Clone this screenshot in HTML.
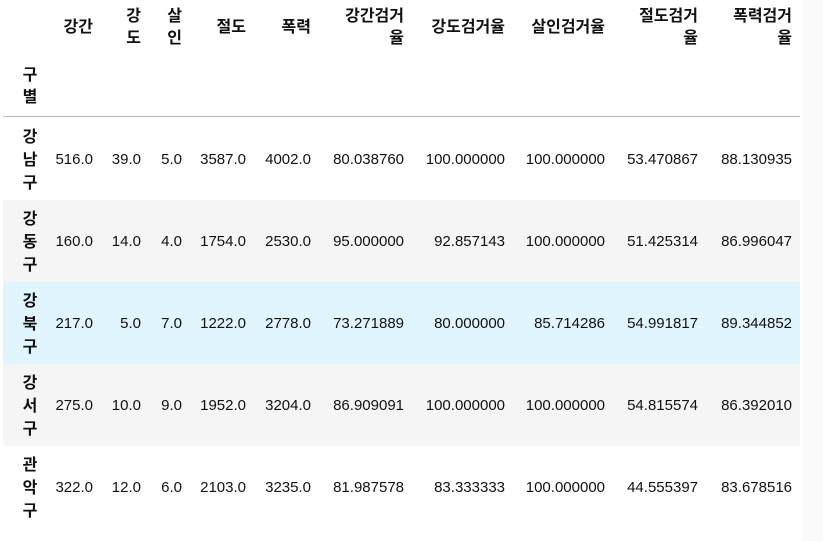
<!DOCTYPE html>
<html><head><meta charset="utf-8"><style>
html,body{margin:0;padding:0;width:823px;height:541px;overflow:hidden;background:#fff;}
body{position:relative;font-family:"Liberation Sans","Noto Sans CJK KR",sans-serif;font-size:16px;color:#111;}
.strip{position:absolute;left:802px;top:0;width:21px;height:541px;background:#fafafa;}
.bg{position:absolute;left:3px;width:797px;}
.line{position:absolute;left:3px;width:797px;top:116px;height:1px;background:#bdbdbd;}
.c{position:absolute;text-align:right;white-space:nowrap;line-height:22px;}
.n{font-size:15px;}
.h{font-weight:bold;}
.idx{position:absolute;left:20px;width:20px;text-align:center;font-weight:bold;line-height:23px;}
</style></head><body>
<div class="strip"></div>
<div class="bg" style="top:200px;height:82px;background:#f5f5f5"></div>
<div class="bg" style="top:282px;height:82px;background:#e1f5fe"></div>
<div class="bg" style="top:364px;height:82px;background:#f5f5f5"></div>
<div class="line"></div>

<!-- header -->
<div class="c h" style="right:730px;top:17px">강간</div>
<div class="c h" style="right:682px;top:6px">강<br>도</div>
<div class="c h" style="right:641px;top:6px">살<br>인</div>
<div class="c h" style="right:577px;top:17px">절도</div>
<div class="c h" style="right:512px;top:17px">폭력</div>
<div class="c h" style="right:419px;top:6px">강간검거<br>율</div>
<div class="c h" style="right:318px;top:17px">강도검거율</div>
<div class="c h" style="right:218px;top:17px">살인검거율</div>
<div class="c h" style="right:125px;top:6px">절도검거<br>율</div>
<div class="c h" style="right:31px;top:6px">폭력검거<br>율</div>
<div class="idx" style="top:65px;line-height:22px">구<br>별</div>

<!-- rows -->
<div class="idx" style="top:126px">강<br>남<br>구</div>
<div class="idx" style="top:208px">강<br>동<br>구</div>
<div class="idx" style="top:290px">강<br>북<br>구</div>
<div class="idx" style="top:372px">강<br>서<br>구</div>
<div class="idx" style="top:454px">관<br>악<br>구</div>

<div style="position:absolute;left:0;top:149px;width:823px">
<div class="c n" style="right:730px">516.0</div><div class="c n" style="right:682px">39.0</div><div class="c n" style="right:641px">5.0</div><div class="c n" style="right:577px">3587.0</div><div class="c n" style="right:512px">4002.0</div><div class="c n" style="right:419px">80.038760</div><div class="c n" style="right:318px">100.000000</div><div class="c n" style="right:218px">100.000000</div><div class="c n" style="right:125px">53.470867</div><div class="c n" style="right:31px">88.130935</div>
</div>
<div style="position:absolute;left:0;top:231px;width:823px">
<div class="c n" style="right:730px">160.0</div><div class="c n" style="right:682px">14.0</div><div class="c n" style="right:641px">4.0</div><div class="c n" style="right:577px">1754.0</div><div class="c n" style="right:512px">2530.0</div><div class="c n" style="right:419px">95.000000</div><div class="c n" style="right:318px">92.857143</div><div class="c n" style="right:218px">100.000000</div><div class="c n" style="right:125px">51.425314</div><div class="c n" style="right:31px">86.996047</div>
</div>
<div style="position:absolute;left:0;top:313px;width:823px">
<div class="c n" style="right:730px">217.0</div><div class="c n" style="right:682px">5.0</div><div class="c n" style="right:641px">7.0</div><div class="c n" style="right:577px">1222.0</div><div class="c n" style="right:512px">2778.0</div><div class="c n" style="right:419px">73.271889</div><div class="c n" style="right:318px">80.000000</div><div class="c n" style="right:218px">85.714286</div><div class="c n" style="right:125px">54.991817</div><div class="c n" style="right:31px">89.344852</div>
</div>
<div style="position:absolute;left:0;top:395px;width:823px">
<div class="c n" style="right:730px">275.0</div><div class="c n" style="right:682px">10.0</div><div class="c n" style="right:641px">9.0</div><div class="c n" style="right:577px">1952.0</div><div class="c n" style="right:512px">3204.0</div><div class="c n" style="right:419px">86.909091</div><div class="c n" style="right:318px">100.000000</div><div class="c n" style="right:218px">100.000000</div><div class="c n" style="right:125px">54.815574</div><div class="c n" style="right:31px">86.392010</div>
</div>
<div style="position:absolute;left:0;top:477px;width:823px">
<div class="c n" style="right:730px">322.0</div><div class="c n" style="right:682px">12.0</div><div class="c n" style="right:641px">6.0</div><div class="c n" style="right:577px">2103.0</div><div class="c n" style="right:512px">3235.0</div><div class="c n" style="right:419px">81.987578</div><div class="c n" style="right:318px">83.333333</div><div class="c n" style="right:218px">100.000000</div><div class="c n" style="right:125px">44.555397</div><div class="c n" style="right:31px">83.678516</div>
</div>
</body></html>
